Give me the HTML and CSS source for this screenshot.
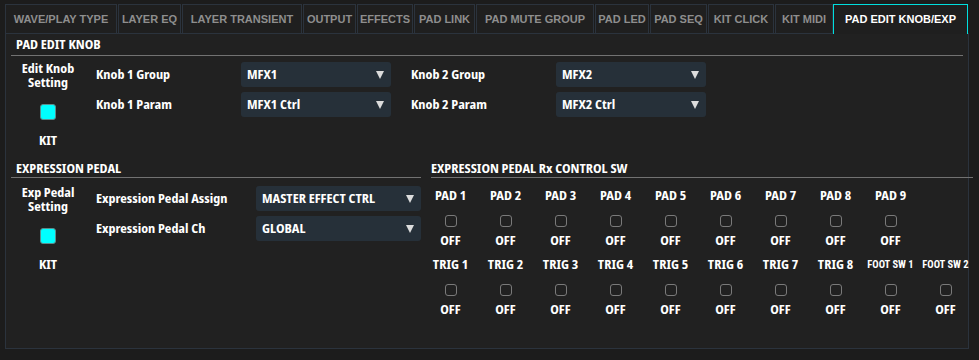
FILE: index.html
```html
<!DOCTYPE html>
<html lang="en">
<head>
  <meta charset="UTF-8">
  <meta name="viewport" content="width=device-width, initial-scale=1.0">
  <title>Pad Edit Knob / Exp</title>
  <link rel="stylesheet" href="styles.css">
</head>
<body>
  <div class="tabs">
    <div class="tab">WAVE/PLAY TYPE</div>
    <div class="tab">LAYER EQ</div>
    <div class="tab">LAYER TRANSIENT</div>
    <div class="tab">OUTPUT</div>
    <div class="tab">EFFECTS</div>
    <div class="tab">PAD LINK</div>
    <div class="tab">PAD MUTE GROUP</div>
    <div class="tab">PAD LED</div>
    <div class="tab">PAD SEQ</div>
    <div class="tab">KIT CLICK</div>
    <div class="tab">KIT MIDI</div>
    <div class="tab active">PAD EDIT KNOB/EXP</div>
  </div>

  <div class="panel">
    <!-- pad edit knob -->
    <div class="section knob-section">
      <div class="section-title">PAD EDIT KNOB</div>
      <div class="section-body knob-body">
        <div class="setting">
          <div class="setting-label">Edit Knob<br>Setting</div>
          <div class="led on"></div>
          <div class="setting-value">KIT</div>
        </div>
        <div class="params knob-params">
          <div class="param-label">Knob 1 Group</div>
          <div class="select">MFX1</div>
          <div class="param-label">Knob 2 Group</div>
          <div class="select">MFX2</div>
          <div class="param-label">Knob 1 Param</div>
          <div class="select">MFX1 Ctrl</div>
          <div class="param-label">Knob 2 Param</div>
          <div class="select">MFX2 Ctrl</div>
        </div>
      </div>
    </div>

    <div class="exp-row">
      <!-- expression pedal -->
      <div class="section exp-left">
        <div class="section-title">EXPRESSION PEDAL</div>
        <div class="section-body exp-body">
          <div class="setting">
            <div class="setting-label">Exp Pedal<br>Setting</div>
            <div class="led on"></div>
            <div class="setting-value">KIT</div>
          </div>
          <div class="params exp-params">
            <div class="param-label">Expression Pedal Assign</div>
            <div class="select">MASTER EFFECT CTRL</div>
            <div class="param-label">Expression Pedal Ch</div>
            <div class="select">GLOBAL</div>
          </div>
        </div>
      </div>

      <!-- rx control switches -->
      <div class="section exp-right">
        <div class="section-title">EXPRESSION PEDAL Rx CONTROL SW</div>
        <div class="rx-grid" id="rxGrid"></div>
      </div>
    </div>
  </div>

  <script>
    const rxNames = [
      "PAD 1", "PAD 2", "PAD 3", "PAD 4", "PAD 5", "PAD 6", "PAD 7", "PAD 8", "PAD 9", "",
      "TRIG 1", "TRIG 2", "TRIG 3", "TRIG 4", "TRIG 5", "TRIG 6", "TRIG 7", "TRIG 8", "FOOT SW 1", "FOOT SW 2"
    ];
    const grid = document.getElementById("rxGrid");
    rxNames.forEach(function (name) {
      const cell = document.createElement("div");
      cell.classList.add("rx-cell");
      if (name) {
        const small = name.indexOf("FOOT") === 0 ? " small" : "";
        cell.innerHTML = `<div class="rx-label${small}">${name}</div><div class="check"></div><div class="rx-value">OFF</div>`;
      }
      grid.appendChild(cell);
    });
  </script>
</body>
</html>
```

FILE: styles.css
```css
body {
  margin: 0;
  padding: 4px 0 0 5px;
  background-color: #1c1c1c;
  font-family: "Liberation Sans", Arial, sans-serif;
  color: #fff;
  height: 356px;
  overflow: hidden;
}

.tabs {
  display: flex;
  gap: 1px;
  height: 30px;
}

.tab {
  box-sizing: border-box;
  height: 30px;
  border: 1px solid #2b333d;
  background: #1f1f1f;
  color: #8e8e8e;
  font-size: 11px;
  font-weight: bold;
  line-height: 28px;
  text-align: center;
  white-space: nowrap;
}

.tab:nth-child(1) { width: 112px; }
.tab:nth-child(2) { width: 63px; }
.tab:nth-child(3) { width: 120px; }
.tab:nth-child(4) { width: 53px; }
.tab:nth-child(5) { width: 56px; }
.tab:nth-child(6) { width: 61px; }
.tab:nth-child(7) { width: 118px; }
.tab:nth-child(8) { width: 54px; }
.tab:nth-child(9) { width: 57px; }
.tab:nth-child(10) { width: 66px; }
.tab:nth-child(11) { width: 58px; }
.tab:nth-child(12) { width: 135px; margin-left: -1px; }

.tab.active {
  border-color: #00dede;
  border-bottom: none;
  color: #fff;
  position: relative;
  z-index: 2;
}

.panel {
  box-sizing: border-box;
  width: 964px;
  height: 316px;
  margin-top: -1px;
  border: 1px solid #2b333d;
  background-color: #212121;
  padding: 0 5px;
}

/* labels use a narrow bold face */
.section-title,
.setting-label,
.setting-value,
.param-label,
.select,
.rx-label,
.rx-value {
  font-family: "Noto Sans Display", Roboto, sans-serif;
  font-stretch: 75%;
  font-weight: bold;
  font-size: 12.5px;
  line-height: 14px;
  white-space: nowrap;
}

.section-title {
  padding: 0 5px 1px;
  border-bottom: 1px solid #727272;
  color: #fff;
}

.knob-section .section-title {
  padding-top: 4px;
  padding-bottom: 3px;
}

.section-body {
  display: flex;
  align-items: flex-start;
}

.setting {
  width: 74px;
  display: flex;
  flex-direction: column;
  align-items: center;
  text-align: center;
}

.led {
  box-sizing: border-box;
  width: 16px;
  height: 16px;
  margin-top: 14px;
  border-radius: 3px;
  border: 1px solid #4a5a5a;
  background: #1e2a2a;
}

.led.on {
  background: #00ffff;
  border-color: #5b8c8c;
}

.setting-value {
  margin-top: 14px;
}

.params {
  display: grid;
  row-gap: 5px;
  align-items: center;
  margin-left: 11px;
}

.knob-params {
  grid-template-columns: 145px 150px 165px 150px;
}

.knob-params .param-label:nth-child(3),
.knob-params .param-label:nth-child(7) {
  margin-left: 20px;
}

.knob-body {
  padding-top: 6px;
  margin-bottom: 14px;
}

.select {
  position: relative;
  box-sizing: border-box;
  height: 25px;
  padding: 0 20px 0 6px;
  line-height: 25px;
  background: #263039;
  border-radius: 3px;
}

.select::after {
  content: "";
  position: absolute;
  right: 7px;
  top: 9px;
  border-left: 4.5px solid transparent;
  border-right: 4.5px solid transparent;
  border-top: 8px solid #dcdcdc;
}

.exp-row {
  display: flex;
  gap: 10px;
}

.exp-left {
  width: 410px;
}

.exp-body {
  padding-top: 8px;
}

.exp-params {
  grid-template-columns: 160px 165px;
}

.exp-right {
  flex: 1;
}

.exp-right .section-title {
  padding-left: 0;
}

.rx-grid {
  display: grid;
  grid-template-columns: repeat(10, 55px);
  row-gap: 10px;
  margin-left: -8px;
  padding-top: 11px;
}

.rx-cell {
  display: flex;
  flex-direction: column;
  align-items: center;
  height: 59px;
}

.rx-label.small {
  font-family: Roboto, sans-serif;
  font-size: 10.5px;
}

.check {
  box-sizing: border-box;
  width: 12px;
  height: 12px;
  margin-top: 12px;
  border: 1.5px solid #7a7a7a;
  border-radius: 3px;
}

.rx-value {
  margin-top: 7px;
}
```
